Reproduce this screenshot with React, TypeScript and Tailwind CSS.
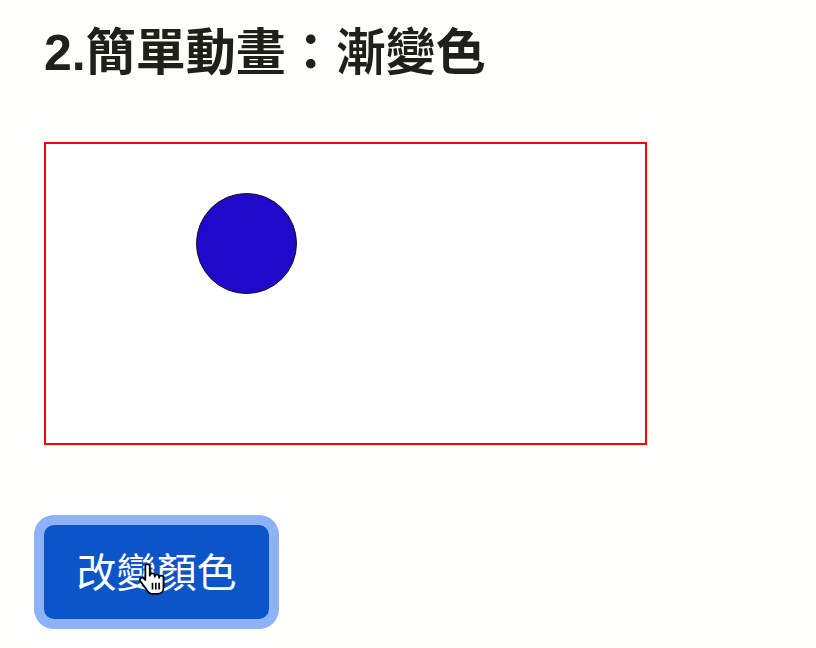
import React from "react";

export default function App() {
  return (
    <div
      className="min-h-[648px] w-[816px] bg-[#fefefb] pl-[44px] pt-[24px]"
      style={{ fontFamily: '"Noto Sans CJK TC", "Noto Sans", sans-serif' }}
    >
      <h1
        className="m-0 text-[50px] font-bold leading-[58px] text-[#20201a]"
        style={{ fontFamily: '"Liberation Sans", "Noto Sans CJK TC", sans-serif' }}
      >
        2.簡單動畫：漸變色
      </h1>
      <div className="mt-[60px] flex h-[303px] w-[603px] border-2 border-[#ff0000] bg-white pl-[150px] pt-[49px]">
        <div className="h-[101px] w-[101px] rounded-full border border-[#111111] bg-[#1f0acc]" />
      </div>
      <div className="relative mt-[80px] w-fit">
        <button className="flex h-[94px] w-[225px] items-center justify-center rounded-[10px] bg-[#0b55c8] pb-[4px] text-[40px] font-normal leading-none text-white ring-[10px] ring-[#8db2f5]">
          改變顏色
        </button>
        <svg
          className="absolute left-[95px] top-[38px]"
          width="27"
          height="33"
          viewBox="0 0 24 30"
        >
          <path
            d="M7.5 1 C6.4 1 5.5 1.9 5.5 3 V15.5 L4 14 C3.2 13.2 1.9 13.2 1.1 14 C0.4 14.7 0.4 15.8 1 16.6 L6 23.5 C7 25 8.5 28 11 28 H17 C20 28 22 25.5 22 22.5 V13.5 C22 12.4 21.1 11.5 20 11.5 C18.9 11.5 18 12.4 18 13.5 V12.5 C18 11.4 17.1 10.5 16 10.5 C14.9 10.5 14 11.4 14 12.5 V11.5 C14 10.4 13.1 9.5 12 9.5 C10.9 9.5 9.5 10.4 9.5 11.5 V3 C9.5 1.9 8.6 1 7.5 1 Z"
            fill="#ffffff"
            stroke="#000000"
            strokeWidth="1.6"
            strokeLinejoin="round"
          />
          <path d="M12 18 V24 M15 18 V24 M18 18 V24" stroke="#000000" strokeWidth="1.5" />
        </svg>
      </div>
    </div>
  );
}
